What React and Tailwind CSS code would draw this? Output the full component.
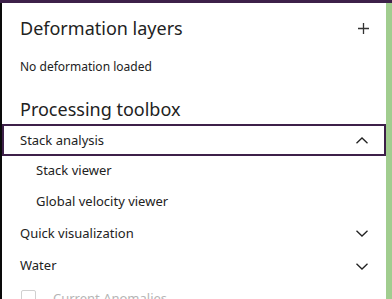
import React from "react";

function ChevronDown() {
  return (
    <svg width="12" height="7" viewBox="0 0 12 7" fill="none" stroke="#222" strokeWidth="1.3">
      <path d="M0.5 0.8 L6 6 L11.5 0.8" />
    </svg>
  );
}
function ChevronUp() {
  return (
    <svg width="12" height="7" viewBox="0 0 12 7" fill="none" stroke="#222" strokeWidth="1.3">
      <path d="M0.5 6.2 L6 1 L11.5 6.2" />
    </svg>
  );
}

export default function App() {
  return (
    <div className="w-[392px] h-[299px] overflow-hidden flex flex-col bg-white" style={{ fontFamily: '"Noto Sans", "Open Sans", sans-serif' }}>
      <div className="h-[3px] bg-[#3d2049] shrink-0" />
      <div className="flex flex-1 min-h-0">
        <div className="w-[2px] bg-[#0a0a0a] shrink-0" />
        <div className="flex-1 flex flex-col text-[#222]">
          <div className="h-[13px] shrink-0" />
          <div className="flex items-center justify-between h-[24px] pl-[18px] pr-[17px] shrink-0">
            <span className="text-[18px] leading-[24px]">Deformation layers</span>
            <svg width="11" height="11" viewBox="0 0 11 11" stroke="#333" strokeWidth="1.3">
              <path d="M5.5 0 V11 M0 5.5 H11" />
            </svg>
          </div>
          <div className="h-[18px] shrink-0" />
          <div className="pl-[18px] text-[12px] leading-[18px] h-[18px] shrink-0">No deformation loaded</div>
          <div className="h-[21px] shrink-0" />
          <div className="pl-[18px] text-[18px] leading-[24px] h-[24px] shrink-0">Processing toolbox</div>
          <div className="h-[3px] shrink-0" />
          <div className="h-[32px] shrink-0 border-2 border-[#3d2049] flex items-center justify-between pl-[16px] pr-[16px]">
            <span className="text-[13px] leading-[18px]">Stack analysis</span>
            <ChevronUp />
          </div>
          <div className="h-[30px] shrink-0 flex items-center pl-[34px] text-[13px]">Stack viewer</div>
          <div className="h-[31px] shrink-0 flex items-center pl-[34px] text-[13px]">Global velocity viewer</div>
          <div className="h-[33px] shrink-0 flex items-center justify-between pl-[18px] pr-[18px] text-[13px]">
            <span>Quick visualization</span>
            <ChevronDown />
          </div>
          <div className="h-[32px] shrink-0 flex items-center justify-between pl-[18px] pr-[18px] text-[13px]">
            <span>Water</span>
            <ChevronDown />
          </div>
          <div className="flex items-start pl-[19px] gap-[17px] mt-[8px] text-[13px] leading-[16px] text-[#b5b5b5] shrink-0">
            <div className="w-[15px] h-[15px] border border-[#d0d0d0] rounded-[2px] shrink-0" />
            <span>Current Anomalies</span>
          </div>
        </div>
        <div className="w-[6px] bg-[#a1cd8f] shrink-0" />
      </div>
    </div>
  );
}
